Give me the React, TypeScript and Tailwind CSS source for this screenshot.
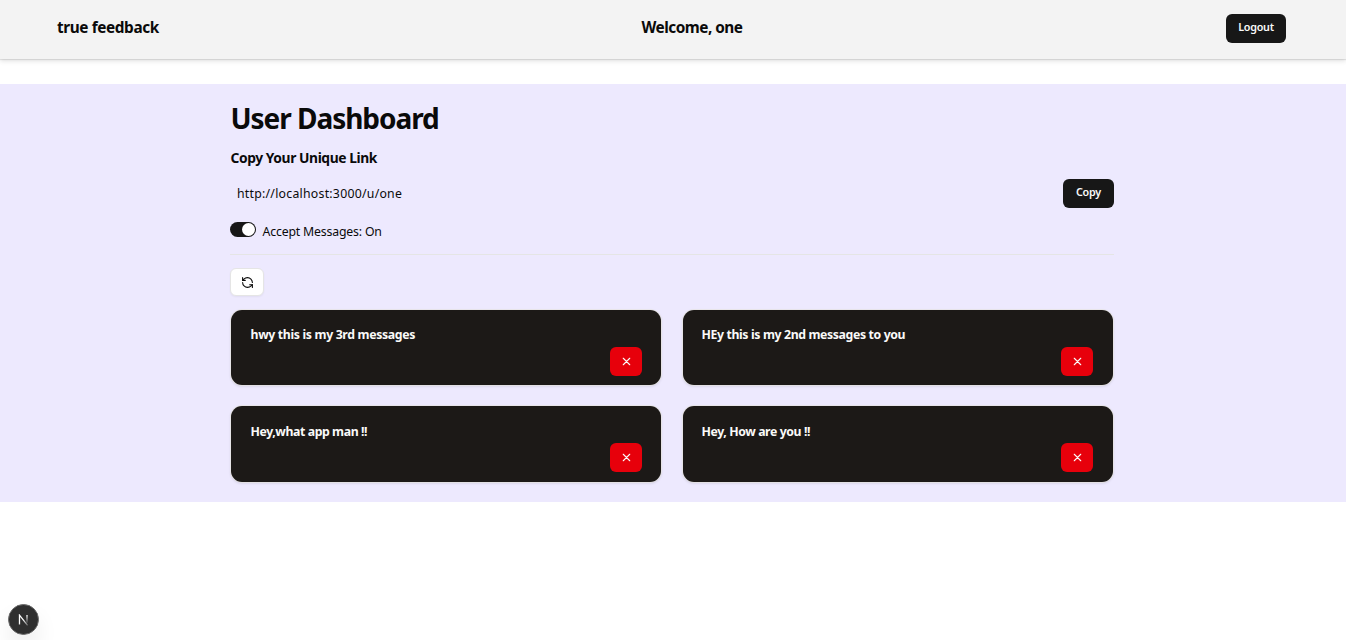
type Message = { text: string; tracking: string; box: string };

const messages: Message[] = [
  { text: 'hwy this is my 3rd messages', tracking: 'tracking-[-0.34px] leading-[20px]', box: 'h-[75px] pr-[19px] pl-[19.5px]' },
  { text: 'HEy this is my 2nd messages to you', tracking: 'tracking-[-0.37px] leading-[20px]', box: 'h-[75px] pr-[20px] pl-[18.5px]' },
  { text: 'Hey,what app man !!', tracking: 'tracking-[-0.41px] leading-[22px]', box: 'h-[76px] pr-[19px] pl-[19.5px]' },
  { text: 'Hey, How are you !!', tracking: 'tracking-[-0.4px] leading-[22px]', box: 'h-[76px] pr-[20px] pl-[18.5px]' },
];

function Navbar() {
  return (
    <nav className="grid h-[59px] grid-cols-[1fr_auto_1fr] items-center bg-[#f3f3f3] pr-[60px] pl-[57px] shadow-[0_1px_1px_rgba(0,0,0,0.09),0_2px_5px_rgba(0,0,0,0.12)]">
      <span className="-mt-[3px] text-[15.36px] leading-6 font-bold tracking-[-0.4px]">true feedback</span>
      <span className="-mt-[3px] ml-[41px] text-[15.36px] leading-6 font-bold tracking-[-0.52px]">Welcome, one</span>
      <button className="mt-[-2px] h-[29px] w-[60px] justify-self-end rounded-[6px] bg-[#171717] pb-[3px] text-[10.75px] font-semibold tracking-[-0.26px] text-[#fafafa]">
        Logout
      </button>
    </nav>
  );
}

function RefreshIcon() {
  return (
    <svg
      className="size-[13px]"
      viewBox="0 0 24 24"
      fill="none"
      stroke="currentColor"
      strokeWidth="2"
      strokeLinecap="round"
      strokeLinejoin="round"
    >
      <path d="M21 12a9 9 0 0 0-9-9 9.75 9.75 0 0 0-6.74 2.74L3 8" />
      <path d="M3 3v5h5" />
      <path d="M3 12a9 9 0 0 0 9 9 9.75 9.75 0 0 0 6.74-2.74L21 16" />
      <path d="M16 16h5v5" />
    </svg>
  );
}

function MessageCard({ message }: { message: Message }) {
  return (
    <article
      className={`flex flex-col rounded-[11px] bg-[#1c1917] pt-[15px] text-[#fafaf9] shadow-[0_0_0_0.8px_#e7e5e4,0_1px_3px_rgba(0,0,0,0.16)] ${message.box}`}
    >
      <h3 className={`h-[22px] text-[12.29px] font-bold whitespace-nowrap ${message.tracking}`}>{message.text}</h3>
      <button className="flex h-[29px] w-8 shrink-0 items-center justify-center self-end rounded-[6px] bg-[#e7000b]">
        <svg className="size-[13px]" viewBox="0 0 24 24" fill="none" stroke="currentColor" strokeWidth="2" strokeLinecap="round">
          <path d="M18 6 6 18M6 6l12 12" />
        </svg>
      </button>
    </article>
  );
}

export default function App() {
  return (
    <div className="relative flex h-[640px] flex-col overflow-hidden bg-white font-['Noto_Sans',sans-serif] text-[#0a0a0a]">
      <Navbar />
      <main className="mt-[25px] h-[418px] bg-[#ede9fe] pt-4 pr-[232px] pl-[230px]">
        <h1 className="h-9 pl-[0.5px] text-[28px] leading-[37px] font-bold tracking-[-1.05px]">User Dashboard</h1>
        <h2 className="mt-[11px] h-[21px] pl-[0.5px] text-[13.82px] leading-[21px] font-bold tracking-[-0.42px]">
          Copy Your Unique Link
        </h2>
        <div className="mt-[11px] flex h-[29px] items-center justify-between">
          <span className="pt-[2px] pl-[7px] text-[12.29px] tracking-[0.25px]">http://localhost:3000/u/one</span>
          <button className="h-[29px] w-[51px] rounded-[6px] bg-[#171717] pb-[3px] text-[10.75px] font-semibold tracking-[-0.22px] text-[#fafafa]">
            Copy
          </button>
        </div>
        <div className="mt-[14px] flex h-[19px]">
          <span className="flex h-[15px] w-[26px] items-center justify-end rounded-full bg-[#171717] pr-[0.8px]">
            <span className="size-[13px] rounded-full bg-white" />
          </span>
          <span className="ml-[6.5px] text-[12.29px] leading-[19px] tracking-[-0.17px]">Accept Messages: On</span>
        </div>
        <div className="mt-[13px] h-px bg-[#e5e5e5]" />
        <button className="mt-[13px] flex h-7 w-[34px] items-center justify-center rounded-[6px] border border-[#e5e5e5] bg-white shadow-[0_1px_2px_rgba(0,0,0,0.05)]">
          <RefreshIcon />
        </button>
        <div className="mt-[14px] mr-px ml-px grid grid-cols-2 gap-x-[22px] gap-y-[21px]">
          {messages.map((message) => (
            <MessageCard key={message.text} message={message} />
          ))}
        </div>
      </main>
      <div className="absolute top-[604px] left-2 flex size-[31px] items-center justify-center rounded-full border border-[#6b6b6b] bg-[#2f2f2f] shadow-[0_13px_26px_-6px_rgba(0,0,0,0.2)]">
        <svg className="h-[12px] w-[11px]" viewBox="0 0 11 12" fill="none">
          <defs>
            <linearGradient id="stem" x1="0" y1="1" x2="0" y2="10" gradientUnits="userSpaceOnUse">
              <stop stopColor="#fff" />
              <stop offset="1" stopColor="#fff" stopOpacity="0" />
            </linearGradient>
            <linearGradient id="diagonal" x1="5" y1="6" x2="10" y2="12" gradientUnits="userSpaceOnUse">
              <stop stopColor="#fff" />
              <stop offset="1" stopColor="#fff" stopOpacity="0.2" />
            </linearGradient>
          </defs>
          <path d="M1.5 10.5V1.2L9.6 11.3" stroke="url(#diagonal)" strokeWidth="1.3" />
          <path d="M9 1v8" stroke="url(#stem)" strokeWidth="1.3" />
        </svg>
      </div>
    </div>
  );
}
